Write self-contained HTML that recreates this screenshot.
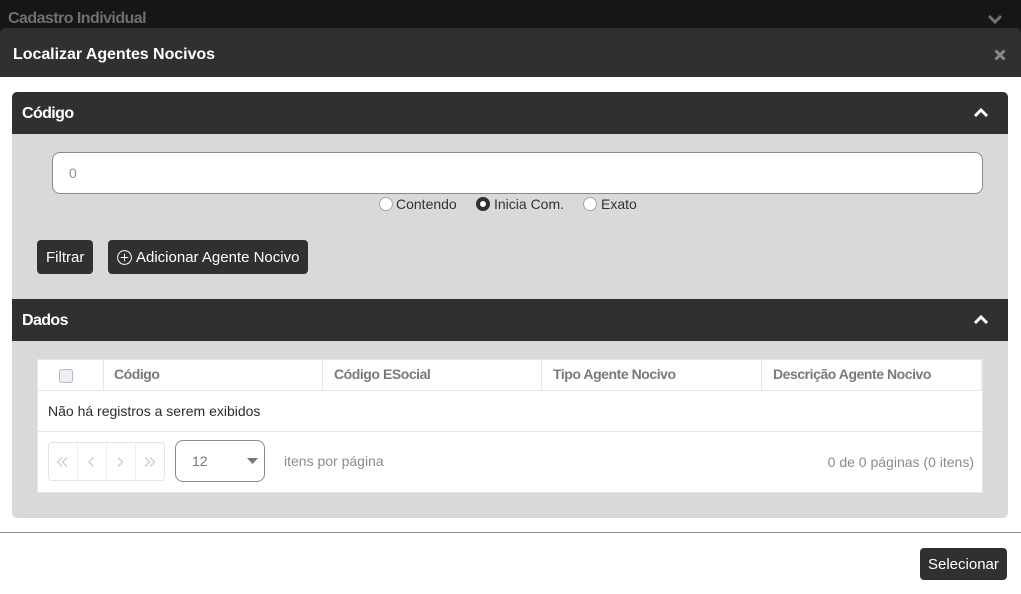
<!DOCTYPE html>
<html lang="pt"><head><meta charset="utf-8"><title>Localizar Agentes Nocivos</title>
<style>
html,body{margin:0;padding:0;background:#fff}
#r{position:relative;width:1021px;height:594px;overflow:hidden;background:#fff;font-family:"Liberation Sans",sans-serif}
#r div,#r span.t{position:absolute;box-sizing:border-box}
.t{white-space:nowrap;line-height:18px}
svg{position:absolute;overflow:visible}
.bar{background:#303030}
.th{font-weight:bold;font-size:14px;color:#7a7a7a;top:365px;letter-spacing:-.45px}
.vl{top:360px;width:1px;height:30px;background:#e3e6ea}
.btn{background:#303030;border-radius:4px}
.rd{width:14px;height:14px;border-radius:50%;background:#fff;border:1px solid #a9a9a9;top:197px}
.rl{font-size:14px;color:#333;top:195px}
.h{font-size:16px;font-weight:bold;color:#fff;letter-spacing:-.6px}
</style></head><body><div id="r">
<div style="left:0;top:0;width:1021px;height:40px;background:#161616"></div>
<span class="t" style="left:8px;top:10px;font-size:16px;font-weight:bold;color:#6f6f6f;letter-spacing:-.55px">Cadastro Individual</span>
<svg style="left:987px;top:13px" width="16" height="11" viewBox="0 0 16 11"><path d="M2 3l6 6 6-6" fill="none" stroke="#6f6f6f" stroke-width="3"/></svg>

<div style="left:0;top:28px;width:1021px;height:49px;background:#303030;border-radius:6px 6px 0 0"></div>
<span class="t" style="left:13px;top:46px;font-size:16px;font-weight:bold;color:#fff;letter-spacing:-.04px">Localizar Agentes Nocivos</span>
<svg style="left:994px;top:49px" width="12" height="12" viewBox="0 0 12 12"><path d="M1.5 1.5l9 9M10.500 1.500l-9 9" fill="none" stroke="#8a8a8a" stroke-width="2.800"/></svg>

<div style="left:12px;top:92px;width:996px;height:426px;background:#d9d9d9;border-radius:5px"></div>
<div class="bar" style="left:12px;top:92px;width:996px;height:42px;border-radius:5px 5px 0 0"></div>
<span class="t h" style="left:22px;top:105px">Código</span>
<svg style="left:973px;top:107px" width="16" height="11" viewBox="0 0 16 11"><path d="M2 9l6-6 6 6" fill="none" stroke="#fff" stroke-width="3"/></svg>

<div style="left:52px;top:152px;width:931px;height:42px;background:#fff;border:1px solid #8a8a8a;border-radius:8px"></div>
<span class="t" style="left:69px;top:164px;font-size:14px;color:#8f8f8f">0</span>

<div class="rd" style="left:379px"></div>
<span class="t rl" style="left:396px">Contendo</span>
<div class="rd" style="left:476px;border:4px solid #303030"></div>
<span class="t rl" style="left:494px">Inicia Com.</span>
<div class="rd" style="left:583px"></div>
<span class="t rl" style="left:601px">Exato</span>

<div class="btn" style="left:37px;top:240px;width:56px;height:34px"></div>
<span class="t" style="left:46px;top:249px;font-size:15px;color:#fff">Filtrar</span>
<div class="btn" style="left:108px;top:240px;width:200px;height:34px"></div>
<svg style="left:117px;top:250px" width="15" height="15" viewBox="0 0 15 15"><circle cx="7.500" cy="7.500" r="6.900" fill="none" stroke="#fff" stroke-width="1"/><path d="M7.500 3.800v7.400M3.800 7.500h7.400" stroke="#fff" stroke-width="1" fill="none"/></svg>
<span class="t" style="left:136px;top:249px;font-size:15px;color:#fff">Adicionar Agente Nocivo</span>

<div class="bar" style="left:12px;top:299px;width:996px;height:42px"></div>
<span class="t h" style="left:22px;top:312px">Dados</span>
<svg style="left:973px;top:314px" width="16" height="11" viewBox="0 0 16 11"><path d="M2 9l6-6 6 6" fill="none" stroke="#fff" stroke-width="3"/></svg>

<div style="left:37px;top:359px;width:946px;height:134px;background:#fff;border:1px solid #e3e6ea"></div>
<div style="left:38px;top:390px;width:944px;height:1px;background:#e3e6ea"></div>
<div style="left:38px;top:431px;width:944px;height:1px;background:#e3e6ea"></div>
<div class="vl" style="left:103px"></div><div class="vl" style="left:322px"></div><div class="vl" style="left:541px"></div><div class="vl" style="left:761px"></div><div class="vl" style="left:981px"></div>
<div style="left:59px;top:369px;width:14px;height:14px;background:#eceff1;border:1px solid #b4b8bc;border-radius:3px"></div>
<span class="t th" style="left:114px">Código</span>
<span class="t th" style="left:334px">Código ESocial</span>
<span class="t th" style="left:553px">Tipo Agente Nocivo</span>
<span class="t th" style="left:773px">Descrição Agente Nocivo</span>
<span class="t" style="left:48px;top:402px;font-size:14px;color:#2b2b2b">Não há registros a serem exibidos</span>

<div style="left:48px;top:442px;width:117px;height:39px;border:1px solid #e3e3e3;border-radius:4px"></div>
<div style="left:77px;top:443px;width:1px;height:37px;background:#eee"></div>
<div style="left:106px;top:443px;width:1px;height:37px;background:#eee"></div>
<div style="left:135px;top:443px;width:1px;height:37px;background:#eee"></div>
<svg style="left:48px;top:442px" width="117" height="39" viewBox="0 0 117 39" fill="none" stroke="#d2d2d2" stroke-width="1.500"><path d="M14 15.500l-4.500 4.500 4.500 4.500M19 15.500l-4.500 4.500 4.500 4.500M45.500 15.500l-4.500 4.500 4.500 4.500M70 15.500l4.500 4.500-4.500 4.500M97 15.500l4.500 4.500-4.500 4.500M102 15.500l4.500 4.500-4.500 4.500"/></svg>

<div style="left:175px;top:440px;width:90px;height:42px;border:1px solid #8a8a8a;border-radius:8px"></div>
<span class="t" style="left:192px;top:452px;font-size:14px;color:#777">12</span>
<svg style="left:247px;top:458px" width="11" height="6" viewBox="0 0 11 6"><path d="M0 0h11l-5.500 6z" fill="#777"/></svg>
<span class="t" style="left:284px;top:452px;font-size:14px;color:#8a8a8a">itens por página</span>
<span class="t" style="right:47px;top:453px;font-size:14px;color:#8a8a8a">0 de 0 páginas (0 itens)</span>

<div style="left:0;top:532px;width:1021px;height:1px;background:#8f8f8f"></div>
<div class="btn" style="left:920px;top:548px;width:87px;height:32px"></div>
<span class="t" style="left:928px;top:556px;font-size:15px;color:#fff">Selecionar</span>
</div></body></html>
